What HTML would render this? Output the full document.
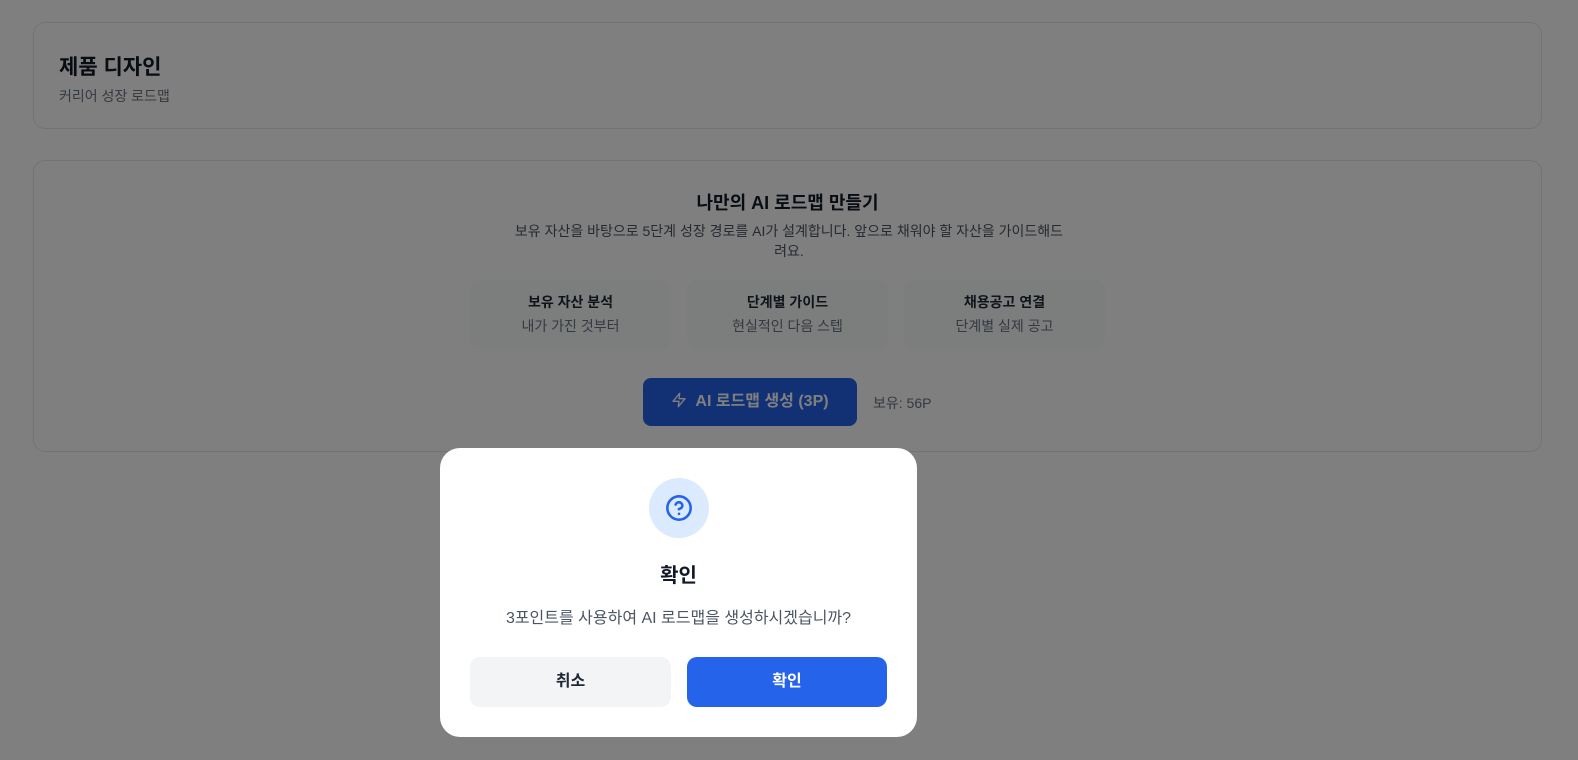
<!DOCTYPE html>
<html><head><meta charset="utf-8"><style>
*{box-sizing:border-box;margin:0;padding:0}
body{width:1578px;height:760px;background:#fff;font-family:"Liberation Sans","Noto Sans CJK KR",sans-serif;position:relative;overflow:hidden;color:#111827}
.card{position:absolute;left:33px;width:1509px;border:1px solid #e5e7eb;border-radius:12px;background:#fff}
.feat{position:absolute;top:280px;height:69px;width:201px;background:#f9fafb;border-radius:10px;text-align:center}
.feat b{display:block;margin-top:12px;font-size:14px;font-weight:700;color:#1f2937}
.feat span{display:block;margin-top:4px;font-size:14px;color:#6b7280}
.ov{position:absolute;inset:0;background:rgba(0,0,0,0.5)}
.dlg{position:absolute;left:440px;top:448px;width:477px;height:289px;background:#fff;border-radius:20px}
.btn{position:absolute;top:209px;height:50px;border-radius:10px;text-align:center;line-height:50px;font-size:16px;font-weight:700}
</style></head><body>
<div class="card" style="top:22px;height:107px">
 <div style="position:absolute;left:25px;top:28px;font-size:21px;font-weight:700">제품 디자인</div>
 <div style="position:absolute;left:25px;top:63px;font-size:14px;color:#6b7280">커리어 성장 로드맵</div>
</div>
<div class="card" style="top:160px;height:292px">
 <div style="position:absolute;left:0;right:0;top:28px;text-align:center;font-size:18px;font-weight:700">나만의 AI 로드맵 만들기</div>
 <div style="position:absolute;left:475px;width:560px;top:60px;text-align:center;font-size:14px;line-height:20px;color:#4b5563">보유 자산을 바탕으로 5단계 성장 경로를 AI가 설계합니다. 앞으로 채워야 할 자산을 가이드해드려요.</div>
</div>
<div class="feat" style="left:470px"><b>보유 자산 분석</b><span>내가 가진 것부터</span></div>
<div class="feat" style="left:687px"><b>단계별 가이드</b><span>현실적인 다음 스텝</span></div>
<div class="feat" style="left:904px"><b>채용공고 연결</b><span>단계별 실제 공고</span></div>
<div style="position:absolute;left:643px;top:378px;width:214px;height:48px;background:#2563eb;border-radius:8px;color:#fff;font-size:16px;font-weight:700;line-height:48px;text-align:center">
<svg width="16" height="18" viewBox="0 0 24 24" fill="none" stroke="#fff" stroke-width="2" stroke-linejoin="round" style="vertical-align:-3px;margin-right:8px"><path d="M13 2 3 14h9l-1 8 10-12h-9l1-8z"/></svg>AI 로드맵 생성 (3P)</div>
<div style="position:absolute;left:873px;top:393px;font-size:14px;color:#6b7280">보유: 56P</div>
<div class="ov"></div>
<div class="dlg">
 <div style="position:absolute;left:209px;top:30px;width:60px;height:60px;border-radius:50%;background:#dbeafe"></div>
 <svg style="position:absolute;left:225px;top:46px" width="28" height="28" viewBox="0 0 24 24" fill="none" stroke="#2563eb" stroke-width="2.2" stroke-linecap="round"><circle cx="12" cy="12" r="10"/><path d="M9.1 9a3 3 0 0 1 5.8 1c0 2-3 3-3 3"/><path d="M12 17h.01"/></svg>
 <div style="position:absolute;left:0;right:0;top:111px;text-align:center;font-size:20px;font-weight:700">확인</div>
 <div style="position:absolute;left:0;right:0;top:156px;text-align:center;font-size:16px;color:#4b5563">3포인트를 사용하여 AI 로드맵을 생성하시겠습니까?</div>
 <div class="btn" style="left:30px;width:201px;background:#f3f4f6;color:#1f2937">취소</div>
 <div class="btn" style="left:247px;width:200px;background:#2563eb;color:#fff">확인</div>
</div>
</body></html>
